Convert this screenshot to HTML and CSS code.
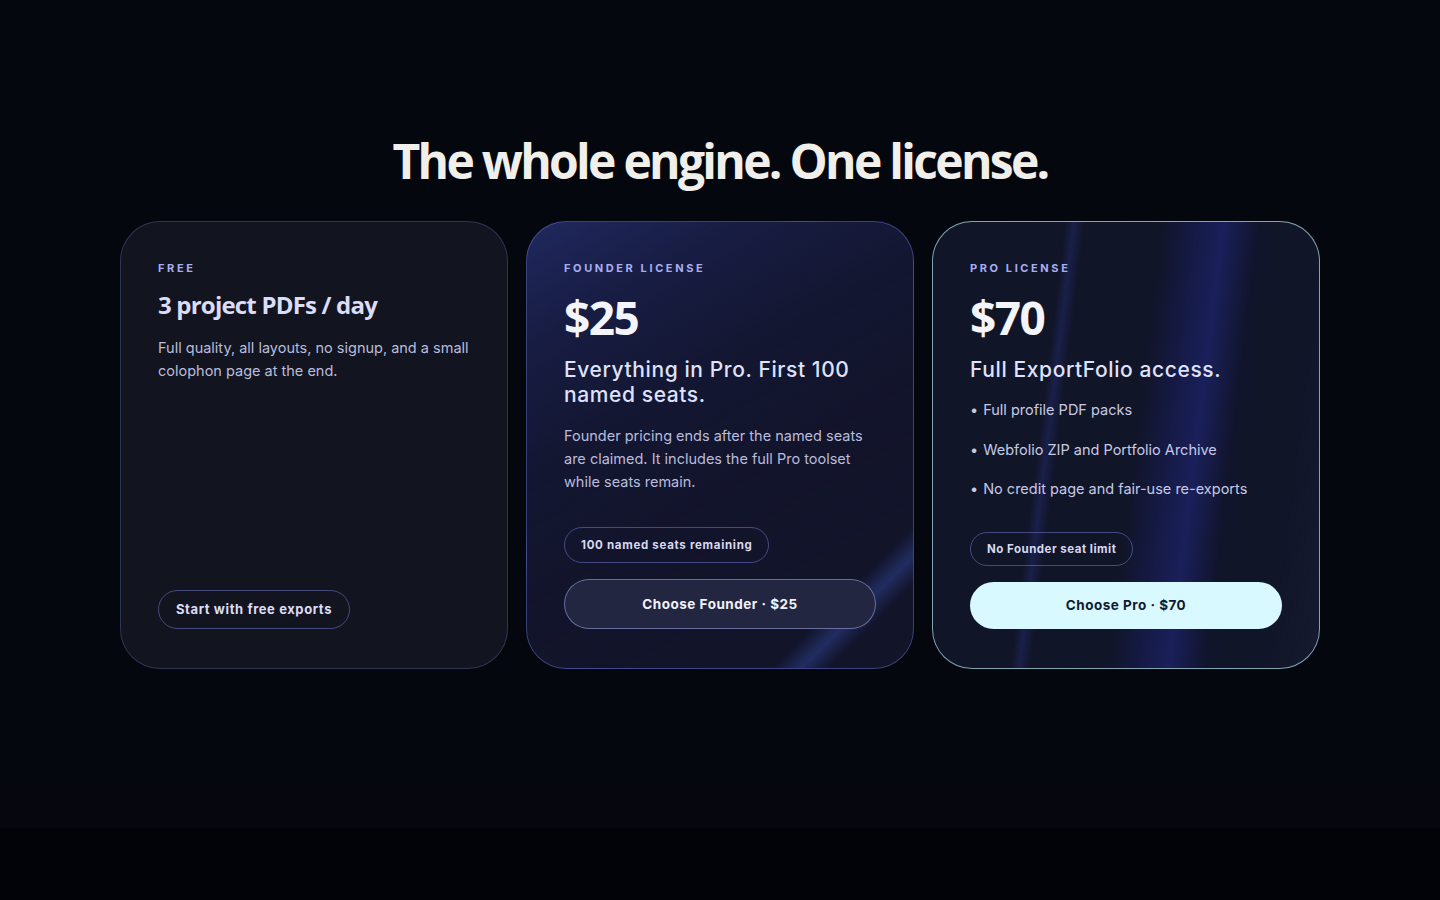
FILE: index.html
```html
<!DOCTYPE html>
<html lang="en">
<head>
	<meta charset="UTF-8">
	<title>ExportFolio pricing</title>
	<link rel="stylesheet" href="styles.css">
</head>
<body>
	<section class="pricing">
		<h1 class="pricing-title">The whole engine. One license.</h1>
		<div class="plans">
			<div class="plan plan-free">
				<p class="plan-label">Free</p>
				<h2 class="plan-name">3 project PDFs / day</h2>
				<p class="plan-text">Full quality, all layouts, no signup, and a small colophon page at the end.</p>
				<div class="plan-foot">
					<a href="javascript:;" class="btn btn-ghost">Start with free exports</a>
				</div>
			</div>
			<div class="plan plan-founder">
				<p class="plan-label">Founder license</p>
				<div class="plan-price">$25</div>
				<h3 class="plan-sub">Everything in Pro. First 100 named seats.</h3>
				<p class="plan-text">Founder pricing ends after the named seats are claimed. It includes the full Pro toolset while seats remain.</p>
				<div class="plan-foot">
					<span class="pill">100 named seats remaining</span>
					<a href="javascript:;" class="btn btn-wide btn-dark">Choose Founder · $25</a>
				</div>
			</div>
			<div class="plan plan-pro">
				<p class="plan-label">Pro license</p>
				<div class="plan-price">$70</div>
				<h3 class="plan-sub">Full ExportFolio access.</h3>
				<ul class="plan-list">
					<li>Full profile PDF packs</li>
					<li>Webfolio ZIP and Portfolio Archive</li>
					<li>No credit page and fair-use re-exports</li>
				</ul>
				<div class="plan-foot">
					<span class="pill pill-sm">No Founder seat limit</span>
					<a href="javascript:;" class="btn btn-wide btn-light">Choose Pro · $70</a>
				</div>
			</div>
		</div>
	</section>
</body>
</html>
```

FILE: styles.css
```css
*{margin: 0;padding: 0;box-sizing: border-box;}
html,body{width: 100%;height: 100%;}
body{
	background: #020308;
	font-family: Inter, "Noto Sans", sans-serif;
	color: #dcdff6;
}
.pricing{
	height: 828px;
	padding-top: 133px;
	background: linear-gradient(180deg, #05070e 0%, #05070e 94%, #06060f 100%);
}
.pricing-title{
	text-align: center;
	font-family: "Open Sans", sans-serif;
	font-weight: 700;
	font-size: 48px;
	line-height: 56px;
	letter-spacing: -2.7px;
	color: #f1efe9;
}
.plans{
	width: 1200px;
	margin: 32px auto 0;
	display: grid;
	grid-template-columns: repeat(3, 1fr);
	gap: 18px;
}
.plan{
	height: 448px;
	border-radius: 40px;
	padding: 39px 37px 39px;
	display: flex;
	flex-direction: column;
	border: 1px solid rgba(110,118,190,0.32);
	background: #121520;
	overflow: hidden;
}
.plan-founder{
	border-color: rgba(110,120,215,0.45);
	background:
		linear-gradient(135deg, transparent 0%, transparent 83%, rgba(48,68,150,0.5) 86.5%, transparent 90%),
		linear-gradient(150deg, rgba(34,44,104,0.85) 0%, rgba(28,36,88,0.55) 18%, rgba(22,28,66,0.3) 38%, rgba(18,20,48,0.1) 60%, transparent 80%),
		#12142a;
}
.plan-pro{
	border-color: rgba(175,225,235,0.7);
	background:
		linear-gradient(97deg, transparent 0%, transparent 30%, rgba(45,55,150,0.3) 32%, transparent 34.5%, transparent 52%, rgba(28,34,120,0.3) 58%, rgba(35,42,140,0.5) 66%, rgba(16,20,60,0.2) 74%, transparent 78%, transparent 88%, rgba(30,34,60,0.4) 100%),
		#111528;
}
.plan-label{
	font-size: 11px;
	font-weight: 700;
	letter-spacing: 2.6px;
	text-transform: uppercase;
	color: #a7aef2;
	line-height: 14px;
}
.plan-name{
	margin-top: 15px;
	font-family: "Open Sans", sans-serif;
	font-weight: 700;
	font-size: 24px;
	letter-spacing: -0.8px;
	line-height: 30px;
	color: #dcdcf7;
}
.plan-price{
	margin-top: 14px;
	font-family: "Open Sans", sans-serif;
	font-weight: 700;
	font-size: 46px;
	letter-spacing: -1.5px;
	line-height: 56px;
	color: #f4f4fb;
}
.plan-sub{
	margin-top: 12px;
	font-size: 21px;
	font-weight: 500;
	letter-spacing: 0.6px;
	line-height: 25px;
	color: #dfe2fa;
}
.plan-text{
	margin-top: 16px;
	font-size: 14.5px;
	line-height: 23px;
	color: #b9bcdc;
}
.plan-founder .plan-text{margin-top: 17px;}
.plan-list{
	list-style: none;
	margin-top: 4px;
}
.plan-list li{
	font-size: 14.5px;
	line-height: 23px;
	color: #c6c9e6;
	margin-top: 16.5px;
}
.plan-list li:first-child{margin-top: 12px;}
.plan-list li:before{
	content: "•";
	margin-right: 5px;
}
.plan-foot{
	margin-top: auto;
	display: flex;
	flex-direction: column;
	align-items: flex-start;
	gap: 16px;
}
.btn{
	display: inline-block;
	text-decoration: none;
	border-radius: 999px;
	font-weight: 700;
	text-align: center;
}
.btn-ghost{
	padding: 0 17px;
	height: 39px;
	line-height: 37px;
	font-size: 13px;
	letter-spacing: 0.6px;
	color: #dcdcf3;
	border: 1px solid rgba(110,118,200,0.55);
}
.btn-wide{
	width: 100%;
	font-size: 13.5px;
	letter-spacing: 0.5px;
}
.btn-dark{
	height: 50px;
	line-height: 48px;
	background: #232640;
	color: #f1f1fa;
	border: 1px solid rgba(150,160,225,0.6);
}
.btn-light{
	height: 47px;
	line-height: 47px;
	background: #d8f9ff;
	color: #121a33;
}
.pill{
	display: inline-block;
	height: 36px;
	line-height: 34px;
	padding: 0 16px;
	border-radius: 999px;
	border: 1px solid rgba(110,118,200,0.55);
	font-size: 11.5px;
	font-weight: 700;
	letter-spacing: 0.7px;
	color: #d8d9f0;
}
.pill-sm{
	height: 34px;
	line-height: 32px;
	letter-spacing: 0.5px;
}
```
